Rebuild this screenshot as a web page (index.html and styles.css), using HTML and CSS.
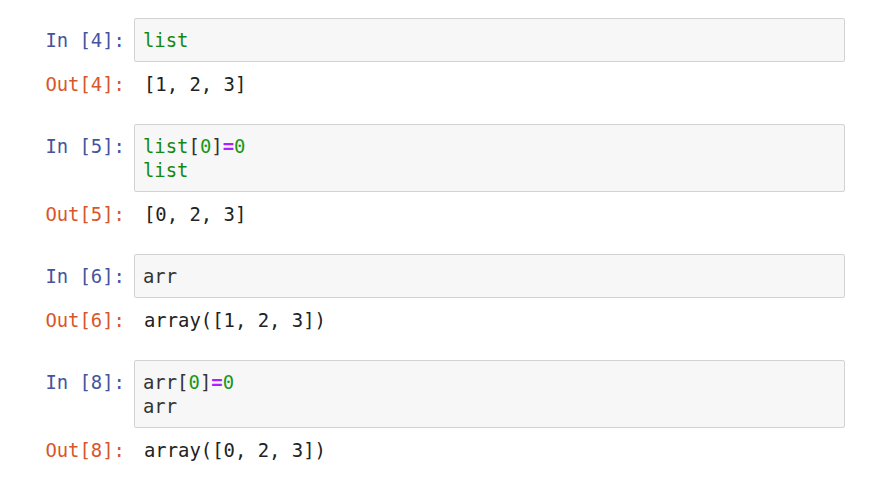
FILE: index.html
```html
<!DOCTYPE html>
<html>
<head>
<meta charset="utf-8">
<link rel="stylesheet" href="styles.css">
</head>
<body>
<div class="notebook">
  <div class="cell">
    <div class="row in-row">
      <div class="prompt in-prompt">In [4]:</div>
      <div class="input"><span class="kw">list</span></div>
    </div>
    <div class="row out-row">
      <div class="prompt out-prompt">Out[4]:</div>
      <div class="output">[1, 2, 3]</div>
    </div>
  </div>
  <div class="cell">
    <div class="row in-row">
      <div class="prompt in-prompt">In [5]:</div>
      <div class="input"><span class="kw">list</span>[<span class="num">0</span>]<span class="op">=</span><span class="num">0</span><br><span class="kw">list</span></div>
    </div>
    <div class="row out-row">
      <div class="prompt out-prompt">Out[5]:</div>
      <div class="output">[0, 2, 3]</div>
    </div>
  </div>
  <div class="cell">
    <div class="row in-row">
      <div class="prompt in-prompt">In [6]:</div>
      <div class="input">arr</div>
    </div>
    <div class="row out-row">
      <div class="prompt out-prompt">Out[6]:</div>
      <div class="output">array([1, 2, 3])</div>
    </div>
  </div>
  <div class="cell">
    <div class="row in-row">
      <div class="prompt in-prompt">In [8]:</div>
      <div class="input">arr[<span class="num">0</span>]<span class="op">=</span><span class="num">0</span><br>arr</div>
    </div>
    <div class="row out-row">
      <div class="prompt out-prompt">Out[8]:</div>
      <div class="output">array([0, 2, 3])</div>
    </div>
  </div>
</div>
</body>
</html>
```
FILE: styles.css
```css
html, body {
  margin: 0;
  padding: 0;
  background: #ffffff;
}
.notebook {
  padding-top: 18px;
  display: flex;
  flex-direction: column;
  gap: 28px;
  font-family: "DejaVu Sans Mono", "Liberation Mono", monospace;
  font-size: 18.9px;
  line-height: 24px;
  color: #333333;
}
.cell {
  display: flex;
  flex-direction: column;
  gap: 10px;
}
.row {
  display: flex;
  align-items: flex-start;
}
.prompt {
  width: 134px;
  flex: none;
  text-align: right;
  padding-right: 9px;
  box-sizing: border-box;
}
.in-row .prompt {
  padding-top: 10px;
}
.in-prompt {
  color: #46549e;
}
.out-prompt {
  color: #d8562c;
}
.input {
  width: 711px;
  box-sizing: border-box;
  background: #f7f7f7;
  border: 1px solid #d2d2d2;
  border-radius: 2px;
  padding: 9px 8px 9px 8px;
  color: #333333;
}
.output {
  padding-left: 10px;
  color: #222222;
}
.kw { color: #148a14; }
.num { color: #189818; }
.op { color: #aa22ff; font-weight: bold; }
```
